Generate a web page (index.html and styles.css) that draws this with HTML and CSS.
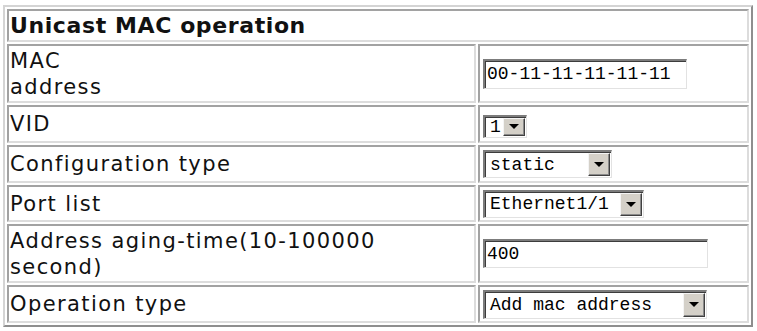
FILE: index.html
```html
<!DOCTYPE html>
<html lang="en">
<head>
    <meta charset="UTF-8">
    <title>Unicast MAC operation</title>
    <link rel="stylesheet" href="styles.css">
</head>
<body>
    <div class="page">
        <table class="op">
            <colgroup>
                <col class="col-label">
                <col class="col-value">
            </colgroup>
            <tr class="head">
                <td colspan="2" class="title">Unicast MAC operation</td>
            </tr>
            <tr class="tall">
                <td class="label">MAC<br>address</td>
                <td class="value"><div class="field mac">00-11-11-11-11-11</div></td>
            </tr>
            <tr class="row">
                <td class="label">VID</td>
                <td class="value">
                    <div class="combo vid"><span class="txt">1</span><span class="drop"><i></i></span></div>
                </td>
            </tr>
            <tr class="row">
                <td class="label">Configuration type</td>
                <td class="value">
                    <div class="combo cfg"><span class="txt">static</span><span class="drop"><i></i></span></div>
                </td>
            </tr>
            <tr class="row short">
                <td class="label">Port list</td>
                <td class="value">
                    <div class="combo port"><span class="txt">Ethernet1/1</span><span class="drop"><i></i></span></div>
                </td>
            </tr>
            <tr class="tall">
                <td class="label">Address aging-time(10-100000<br>second)</td>
                <td class="value"><div class="field aging">400</div></td>
            </tr>
            <tr class="row">
                <td class="label">Operation type</td>
                <td class="value">
                    <div class="combo optype"><span class="txt">Add mac address</span><span class="drop"><i></i></span></div>
                </td>
            </tr>
        </table>
    </div>
</body>
</html>
```

FILE: styles.css
```css
body {
    margin: 0;
    background-color: #fff;
    font-family: "DejaVu Sans", Verdana, sans-serif;
    color: #111;
}

.page {
    padding: 5px 0 0 3px;
}

.op {
    width: 750px;
    table-layout: fixed;
    border-collapse: separate;
    border-spacing: 2px;
    border: 2px solid;
    border-color: #d4d4d4 #8e8e8e #8e8e8e #d4d4d4;
}

.col-label {
    width: 469px;
}

.col-value {
    width: 271px;
}

.op td {
    box-sizing: border-box;
    border: 2px solid;
    border-color: #a2a2a2 #dcdcdc #dcdcdc #a2a2a2;
    vertical-align: middle;
    white-space: nowrap;
}

.head td {
    height: 33px;
}

.tall td {
    height: 59px;
}

.row td {
    height: 38px;
}

.row.short td {
    height: 37px;
}

.title {
    padding: 0 1px;
    font-size: 22px;
    font-weight: bold;
    letter-spacing: 0.6px;
}

.label {
    padding: 0 1px;
    font-size: 21px;
    line-height: 26px;
    letter-spacing: 1.4px;
}

.value {
    padding: 0 0 0 3px;
}

/* sunken text boxes and drop-down boxes */
.field,
.combo {
    box-sizing: border-box;
    border-top: 2px solid #7c7c7c;
    border-left: 2px solid #7c7c7c;
    border-right: 1px solid #e2e2e2;
    border-bottom: 1px solid #e2e2e2;
    box-shadow: inset 1px 1px 0 #3c3c3c;
    background-color: #fff;
    font-family: "Liberation Mono", "Courier New", monospace;
    font-size: 18px;
    color: #000;
}

.field {
    padding: 0 0 0 2px;
}

.mac {
    width: 204px;
    height: 30px;
    line-height: 27px;
}

.aging {
    width: 225px;
    height: 29px;
    line-height: 26px;
}

.combo {
    display: flex;
    align-items: stretch;
    padding: 1px;
}

.combo .txt {
    flex: 1;
    padding-left: 4px;
    white-space: pre;
    display: flex;
    align-items: center;
}

.combo .drop {
    width: 20px;
    display: flex;
    align-items: center;
    justify-content: center;
    background-color: #d4d0c8;
    border: 1px solid;
    border-color: #f4f4f4 #404040 #404040 #f4f4f4;
    box-shadow: inset -1px -1px 0 #8a8a8a;
}

.combo .drop i {
    width: 0;
    height: 0;
    border-left: 5px solid transparent;
    border-right: 5px solid transparent;
    border-top: 5px solid #000;
}

.vid {
    width: 44px;
    height: 23px;
    margin-top: 4px;
}

.cfg {
    width: 129px;
    height: 28px;
}

.port {
    width: 161px;
    height: 28px;
}

.optype {
    width: 224px;
    height: 29px;
}
```
